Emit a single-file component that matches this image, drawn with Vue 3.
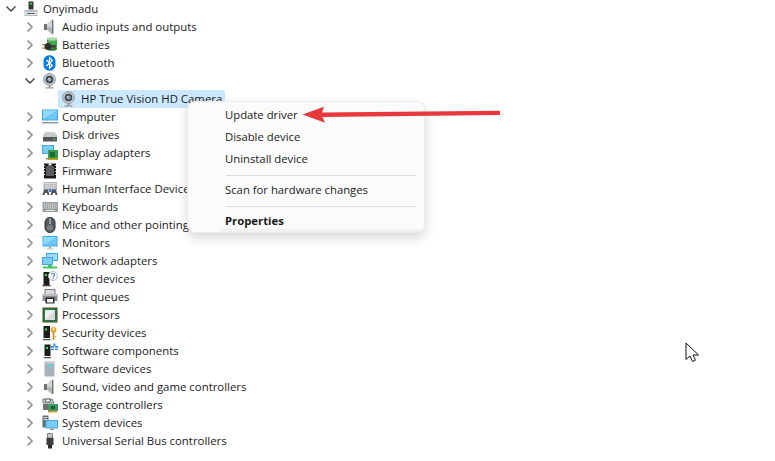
<script setup>
const speaker = '<path d="M2 5h3v6H2z" fill="#6f7377"/><path d="M5 5 10 .5v15L5 11z" fill="#b4b8bb"/><path d="M10 .5 11.500 1.500v13l-1.500 1z" fill="#74787c"/><path d="M5 5 10 .5V8H5z" fill="#d2d4d6"/>'
const webcam = '<circle cx="7.500" cy="6.500" r="6" fill="#c3c5c7" stroke="#85888b" stroke-width=".7"/><circle cx="7.500" cy="6.500" r="3.800" fill="#3c4852"/><circle cx="7.500" cy="6.500" r="2.100" fill="#86a2b8"/><circle cx="6.800" cy="5.700" r=".7" fill="#e6eef5"/><path d="M6.800 12.500h1.400v2H6.800z" fill="#777"/><path d="M3.500 14.300h8v1.200h-8z" fill="#8f9295"/>'
const blueMon = '<path d="M.5 1h15v10.500H.5z" fill="#3fa9e8"/><path d="M1.500 2h13v8.500h-13z" fill="#6cc7f5"/><path d="M1.500 2h13L1.500 10z" fill="#93daf9"/>'
const icons = {
  computer: '<path d="M0 .5h16v11H0z" fill="#3fa9e8"/><path d="M1 1.500h14v9H1z" fill="#6cc7f5"/><path d="M1 1.500h14L1 10z" fill="#93daf9"/><path d="M0 13h16v1.500H0z" fill="#9a9da0"/>',
  audio: speaker,
  batteries: '<path d="M5 1.500h10v10.500H5z" fill="#45a849"/><ellipse cx="10" cy="2" rx="5" ry="1.800" fill="#a9dca6"/><ellipse cx="10" cy="12" rx="5" ry="1.800" fill="#2d7f34"/><path d="M0 7h4v1.300H0zM0 10.500h4v1.300H0z" fill="#b8862c"/><circle cx="6" cy="9.500" r="3.500" fill="#2d2f31"/><path d="M9 8h5v2.500H9z" fill="#3c3e40"/>',
  bluetooth: '<rect x="1.500" y=".3" width="12" height="15.400" rx="5.500" fill="#0a7be0"/><path d="M4.500 5 10.300 10.500 7.500 13.300V2.700l2.800 2.800L4.500 11" fill="none" stroke="#fff" stroke-width="1.200"/>',
  camera: webcam,
  disk: '<path d="M1 8 3.500 5h9l2.500 3v3H1z" fill="#c8cacc"/><path d="M1 10h14v4.500H1z" fill="#54575a"/><path d="M11.500 11.500h1.700v1.400h-1.700z" fill="#4be35d"/>',
  display: '<path d="M0 0h12v9H0z" fill="#3fa9e8"/><path d="M1 1h10v7H1z" fill="#7ccdf6"/><path d="M4 13h4v1.500H4z" fill="#8f9295"/><path d="M6 5h10v10H6z" fill="#3a9a4c"/><path d="M8 7h5v5H8z" fill="#1d6a2d"/><path d="M6 13.500h10V15H6z" fill="#d4a017"/>',
  firmware: '<path d="M2 .5h12v15H2z" fill="#1a1a1a"/><path d="M4 3h8v10H4z" fill="#5a5c5e"/><path d="M6.500.5h3v2h-3z" fill="#fff"/><path d="M2 2h1v1H2zM2 5h1v1H2zM2 8h1v1H2zM2 11h1v1H2zM13 2h1v1h-1zM13 5h1v1h-1zM13 8h1v1h-1zM13 11h1v1h-1z" fill="#d8d8d8"/>',
  hid: '<path d="M1.500 1h13.500v8H1.500z" fill="#b7babd"/><path d="M3 2.500h10.500M3 4.500h10.500M3 6.500h10.500" stroke="#e9eaeb" stroke-width="1" stroke-dasharray="1.300 .7"/><path d="M.5 14 2 8.500h4L7.500 14H5.500L5 12H3L2.500 14zM8.500 14 10 8.500h4L15.500 14h-2L13 12h-2l-.5 2z" fill="#50565c"/><path d="M7 8h2.500v3H7z" fill="#3b7fd0"/>',
  keyboards: '<path d="M.5 3h15.500v10H.5z" fill="#9b9ea1"/><path d="M2 5h12.500M2 7h12.500M2 9h12.500" stroke="#e6e7e8" stroke-width="1.100" stroke-dasharray="1.300 .7"/><path d="M4 11h8.500v1H4z" fill="#e6e7e8"/>',
  mice: '<rect x="3" y=".5" width="10" height="15" rx="4.800" fill="#55595d" stroke="#2c2e30"/><path d="M8 1v6" stroke="#a4a8ac" stroke-width="1.800"/><rect x="5" y="8" width="6" height="5.500" rx="2.500" fill="#7b7f83"/>',
  monitors: blueMon + '<path d="M7 11.500h2v2H7z" fill="#a5a8ab"/><path d="M4.500 13.500h7v1h-7z" fill="#b9bcbe"/>',
  network: '<path d="M4 0h12v8H4z" fill="#3fa9e8"/><path d="M5 1h10v6H5z" fill="#9adcf9"/><path d="M0 4h11v8H0z" fill="#3fa9e8"/><path d="M1 5h9v6H1z" fill="#7ccdf6"/><path d="M6 12h4v1.500h5V15.500H1v-2h5z" fill="#47c25b"/>',
  other: '<path d="M1.500 1h6v13h-6z" fill="#1d1d1d"/><path d="M.5 14h8v1.300h-8z" fill="#444"/><path d="M3 3h2v2H3z" fill="#35e04e"/><circle cx="11" cy="5" r="4.500" fill="#fff" stroke="#b7babd"/><path d="M9.500 3.800c0-2 3-2 3 0 0 1.300-1.500 1.200-1.500 2.500M11 7.200v1" fill="none" stroke="#3e83c9" stroke-width="1.100"/>',
  print: '<path d="M3 .5h10v5H3z" fill="#d9dadb" stroke="#777"/><path d="M.5 5h15v7H.5z" fill="#8c8f92"/><path d="M.5 5h15v2H.5z" fill="#b9bbbd"/><path d="M3.500 8.500h9v6h-9z" fill="#242628"/><path d="M5 10h6v3.500H5z" fill="#f5f5f5"/>',
  processors: '<path d="M.5.5h15v15H.5z" fill="#2c6e49"/><path d="M.5.5h15v15H.5z" fill="none" stroke="#b59a3c" stroke-dasharray="1 1"/><path d="M3 3h10v10H3z" fill="#d9dcda"/><path d="M3 3h10L3 13z" fill="#eef0ee"/>',
  security: '<path d="M1.500 1h6.500v12H1.500z" fill="#1d1d1d"/><path d="M1 14h7.500v1.200H1z" fill="#444"/><path d="M3 3.500h2v2H3z" fill="#35e04e"/><circle cx="11.500" cy="5" r="3" fill="#e3a93a"/><circle cx="11.500" cy="4.200" r=".9" fill="#fff"/><path d="M10.600 7.500h1.800V15h-1.800z" fill="#d4952a"/><path d="M12.400 11h1.300v1.200h-1.300z" fill="#d4952a"/>',
  swcomp: '<path d="M2.500 1.500h6v11.500h-6z" fill="#1d1d1d"/><path d="M2 14h7v1.200H2z" fill="#444"/><path d="M4 4h2v2H4z" fill="#35e04e"/><path d="M9 3h2.500V.5h2V3H16v4H9z" fill="#2f88e0"/><path d="M12 3h1v4h-1zM9 4.700h7v1H9z" fill="#fff"/>',
  swdev: '<rect x="2.500" y=".5" width="10" height="15" rx="1" fill="#a7b1bb"/><path d="M2.500.5h10v2h-10z" fill="#c9d0d6"/><path d="M6 3.500h2.500v2.500H6z" fill="#3fe1ee"/>',
  sound: speaker,
  storage: '<path d="M1 2h9l2 4H1z" fill="#cfd1d3" stroke="#444" stroke-width=".7"/><path d="M3 3.500 6 1.500l3 2-3 2z" fill="#fff" stroke="#333" stroke-width=".7"/><path d="M1 7h7v6H1z" fill="#6c7074"/><path d="M6 7h10v7H6z" fill="#3a9a63"/><path d="M9 9h4v3H9z" fill="#1f5a3a"/><path d="M6 14h9v1.500H6z" fill="#e5962a"/>',
  system: '<path d="M.5.5h6v12h-6z" fill="#6a6d70"/><path d="M1.500 2h4v1h-4zM1.500 4h4v1h-4z" fill="#d8dadc"/><path d="M3.500 5h12.500v8.500H3.500z" fill="#3fa9e8"/><path d="M4.500 6h10.500v6.500H4.500z" fill="#7ccdf6"/><path d="M8 13.500h4v1.500H8z" fill="#9a9da0"/>',
  usb: '<path d="M5.500.5h5V5h-5z" fill="#c7c9cb" stroke="#555" stroke-width=".7"/><path d="M4.500 5h7v7H4.500z" fill="#3a3c3e"/><path d="M6 12h4v3.500H6z" fill="#26282a"/>',
  host: '<path d="M5.500.5h5v8h-5z" fill="#35393d"/><path d="M7 2h2v1.500H7z" fill="#35e04e"/><path d="M1.500 9h13v6h-13z" fill="#b9bcbe"/><path d="M2.500 11h11v3h-11z" fill="#e9eaeb"/><path d="M4 12h8v1H4z" fill="#55595d"/>'
}
const rows = [
  { label: 'Onyimadu', icon: 'host', depth: 0, open: true },
  { label: 'Audio inputs and outputs', icon: 'audio', depth: 1 },
  { label: 'Batteries', icon: 'batteries', depth: 1 },
  { label: 'Bluetooth', icon: 'bluetooth', depth: 1 },
  { label: 'Cameras', icon: 'camera', depth: 1, open: true },
  { label: 'HP True Vision HD Camera', icon: 'camera', depth: 2, leaf: true, selected: true },
  { label: 'Computer', icon: 'computer', depth: 1 },
  { label: 'Disk drives', icon: 'disk', depth: 1 },
  { label: 'Display adapters', icon: 'display', depth: 1 },
  { label: 'Firmware', icon: 'firmware', depth: 1 },
  { label: 'Human Interface Devices', icon: 'hid', depth: 1 },
  { label: 'Keyboards', icon: 'keyboards', depth: 1 },
  { label: 'Mice and other pointing devices', icon: 'mice', depth: 1 },
  { label: 'Monitors', icon: 'monitors', depth: 1 },
  { label: 'Network adapters', icon: 'network', depth: 1 },
  { label: 'Other devices', icon: 'other', depth: 1 },
  { label: 'Print queues', icon: 'print', depth: 1 },
  { label: 'Processors', icon: 'processors', depth: 1 },
  { label: 'Security devices', icon: 'security', depth: 1 },
  { label: 'Software components', icon: 'swcomp', depth: 1 },
  { label: 'Software devices', icon: 'swdev', depth: 1 },
  { label: 'Sound, video and game controllers', icon: 'sound', depth: 1 },
  { label: 'Storage controllers', icon: 'storage', depth: 1 },
  { label: 'System devices', icon: 'system', depth: 1 },
  { label: 'Universal Serial Bus controllers', icon: 'usb', depth: 1 }
]
</script>

<template>
  <div class="page">
    <ul class="tree">
      <li v-for="r in rows" :key="r.label" class="row" :class="'depth' + r.depth">
        <svg class="chev" viewBox="0 0 12 12">
          <path v-if="r.open" d="M1.500 3.500 6 8l4.500-4.500" fill="none" stroke="#404040" stroke-width="1.400" />
          <path v-else-if="!r.leaf" d="M3.500 1.500 8 6 3.500 10.500" fill="none" stroke="#8a8a8a" stroke-width="1.500" />
        </svg>
        <div class="entry" :class="{ selected: r.selected }">
          <svg class="icon" viewBox="0 0 16 16" v-html="icons[r.icon]"></svg>
          <span class="label">{{ r.label }}</span>
        </div>
      </li>
    </ul>

    <div class="menu">
      <div class="item">Update driver</div>
      <div class="item">Disable device</div>
      <div class="item">Uninstall device</div>
      <div class="sep"></div>
      <div class="item">Scan for hardware changes</div>
      <div class="sep"></div>
      <div class="item strong">Properties</div>
      <div class="strip"></div>
    </div>

    <svg class="arrow" viewBox="0 0 204 24">
      <path d="M3.500 10.500 25 2.700 23 8.500 201 6.800V11L23.500 13 26 18.700z" fill="#e8383d" />
    </svg>

    <svg class="cursor" viewBox="0 0 16 22">
      <path d="M1 1V17.500L5 14l2.500 5.500 3-1.300L8 13h5.500z" fill="#fff" stroke="#111" stroke-width="1" stroke-linejoin="round" />
    </svg>
  </div>
</template>

<style scoped>
.page {
  position: relative;
  width: 775px;
  height: 461px;
  overflow: hidden;
  background: #fff;
  font-family: "Open Sans", "Noto Sans", sans-serif;
  font-size: 11.4px;
  color: #1a1a1a;
}
.tree {
  list-style: none;
  margin: 0;
  padding: 0;
}
.row {
  display: flex;
  align-items: center;
  height: 18px;
  gap: 6px;
  white-space: nowrap;
}
.depth0 { padding-left: 5px; }
.depth1 { padding-left: 24px; }
.depth2 { padding-left: 43px; }
.chev {
  width: 12px;
  height: 12px;
  flex: none;
}
.entry {
  display: flex;
  align-items: center;
  gap: 4px;
  height: 18px;
}
.label { padding-bottom: 2px; }
.selected {
  margin-left: -3px;
  padding: 0 3px 0 3px;
  background: #cce8ff;
  border-radius: 2px;
}
.icon {
  width: 16px;
  height: 16px;
  flex: none;
}
.menu {
  position: absolute;
  left: 187px;
  top: 101px;
  width: 238px;
  height: 132px;
  box-sizing: border-box;
  padding-top: 3px;
  background: #fbfbfb;
  border: 1px solid #ececec;
  border-radius: 8px;
  box-shadow: 0 5px 12px rgba(0, 0, 0, 0.16);
  overflow: hidden;
  font-size: 11.3px;
}
.item {
  height: 22px;
  line-height: 20px;
  padding-left: 37px;
}
.strong { font-weight: 700; }
.sep {
  height: 1px;
  margin: 4px 8px 4px 38px;
  background: #dcdcdc;
}
.strip {
  position: absolute;
  left: 33px;
  right: 0;
  bottom: 0;
  height: 3px;
  background: #f1f1f1;
}
.arrow {
  position: absolute;
  left: 299px;
  top: 104px;
  width: 204px;
  height: 24px;
}
.cursor {
  position: absolute;
  left: 685px;
  top: 342px;
  width: 16px;
  height: 22px;
}
</style>
